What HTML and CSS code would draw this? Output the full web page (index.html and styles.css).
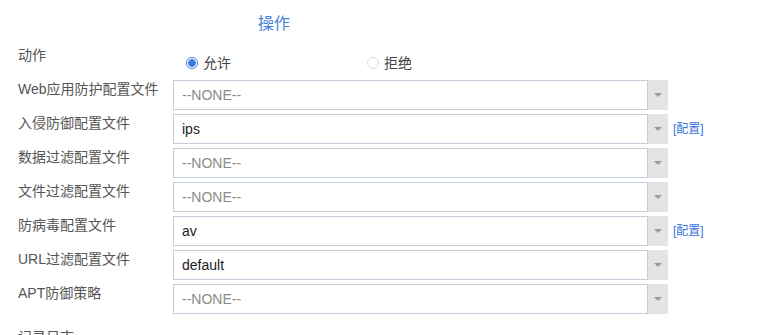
FILE: index.html
```html
<!DOCTYPE html>
<html>
<head lang="zh-CN">
    <meta charset="UTF-8">
    <title>操作</title>
    <link rel="stylesheet" href="styles.css">
</head>
<body>
    <div class="panel">
        <div class="title">操作</div>

        <div class="row actionRow">
            <label class="rowLabel">动作</label>
            <div class="radios actionRadios">
                <span class="radio checked"><i></i>允许</span>
                <span class="radio"><i></i>拒绝</span>
            </div>
        </div>

        <div class="row">
            <label class="rowLabel">Web应用防护配置文件</label>
            <div class="select"><div class="selectBox empty">--NONE--</div><div class="selectBtn"><b></b></div></div>
        </div>
        <div class="row">
            <label class="rowLabel">入侵防御配置文件</label>
            <div class="select"><div class="selectBox">ips</div><div class="selectBtn"><b></b></div></div>
            <a class="config" href="#">[配置]</a>
        </div>
        <div class="row">
            <label class="rowLabel">数据过滤配置文件</label>
            <div class="select"><div class="selectBox empty">--NONE--</div><div class="selectBtn"><b></b></div></div>
        </div>
        <div class="row">
            <label class="rowLabel">文件过滤配置文件</label>
            <div class="select"><div class="selectBox empty">--NONE--</div><div class="selectBtn"><b></b></div></div>
        </div>
        <div class="row">
            <label class="rowLabel">防病毒配置文件</label>
            <div class="select"><div class="selectBox">av</div><div class="selectBtn"><b></b></div></div>
            <a class="config" href="#">[配置]</a>
        </div>
        <div class="row">
            <label class="rowLabel">URL过滤配置文件</label>
            <div class="select"><div class="selectBox">default</div><div class="selectBtn"><b></b></div></div>
        </div>
        <div class="row">
            <label class="rowLabel">APT防御策略</label>
            <div class="select"><div class="selectBox empty">--NONE--</div><div class="selectBtn"><b></b></div></div>
        </div>

        <div class="row logRow">
            <label class="rowLabel">记录日志</label>
            <div class="radios logRadios">
                <span class="radio checked"><i></i>开启</span>
                <span class="radio"><i></i>关闭</span>
            </div>
        </div>
    </div>
</body>
</html>
```

FILE: styles.css
```css
body {
    margin: 0;
    background: white;
    font-family: "Liberation Sans", "Noto Sans CJK SC", sans-serif;
    color: #555;
    overflow: hidden;
}
.panel {
    padding-left: 18px;
}
.title {
    padding: 15px 0 13px 240px;
    font-size: 16px;
    line-height: 18px;
    color: #4a80dc;
}
.row {
    display: flex;
    align-items: flex-start;
    height: 30px;
    margin-bottom: 4px;
}
.rowLabel {
    width: 155px;
    flex: none;
    font-size: 14px;
    line-height: 18px;
}
.radios {
    display: flex;
    font-size: 14px;
    line-height: 18px;
    color: #444;
}
.actionRadios {
    padding: 8px 0 0 13px;
    gap: 0 136px;
}
.logRow {
    margin-top: 14px;
}
.logRadios {
    padding: 8px 0 0 5px;
    gap: 0 35px;
}
.radio {
    display: flex;
    align-items: center;
}
.radio i {
    box-sizing: border-box;
    width: 12px;
    height: 12px;
    margin-right: 5px;
    border: 1px solid #dcdcdc;
    border-radius: 50%;
    background: white;
}
.radio.checked i {
    border: 1px solid #3a7be0;
    background: radial-gradient(circle, #3a7be0 0 3.5px, white 4px);
}
.select {
    display: flex;
    height: 30px;
    font-size: 14px;
}
.selectBox {
    box-sizing: border-box;
    width: 475px;
    height: 30px;
    padding-left: 8px;
    border: 1px solid #c3cddd;
    line-height: 28px;
    color: #222;
}
.selectBox.empty {
    color: #8a8a8a;
}
.selectBtn {
    width: 20px;
    height: 30px;
    background: #e4e4e4;
    display: flex;
    align-items: center;
    justify-content: center;
}
.selectBtn b {
    width: 0;
    height: 0;
    border-left: 4.5px solid transparent;
    border-right: 4.5px solid transparent;
    border-top: 4px solid #9a9a9a;
}
.config {
    margin-left: 5px;
    font-size: 12px;
    line-height: 30px;
    color: #3b74d8;
    text-decoration: none;
}
```
